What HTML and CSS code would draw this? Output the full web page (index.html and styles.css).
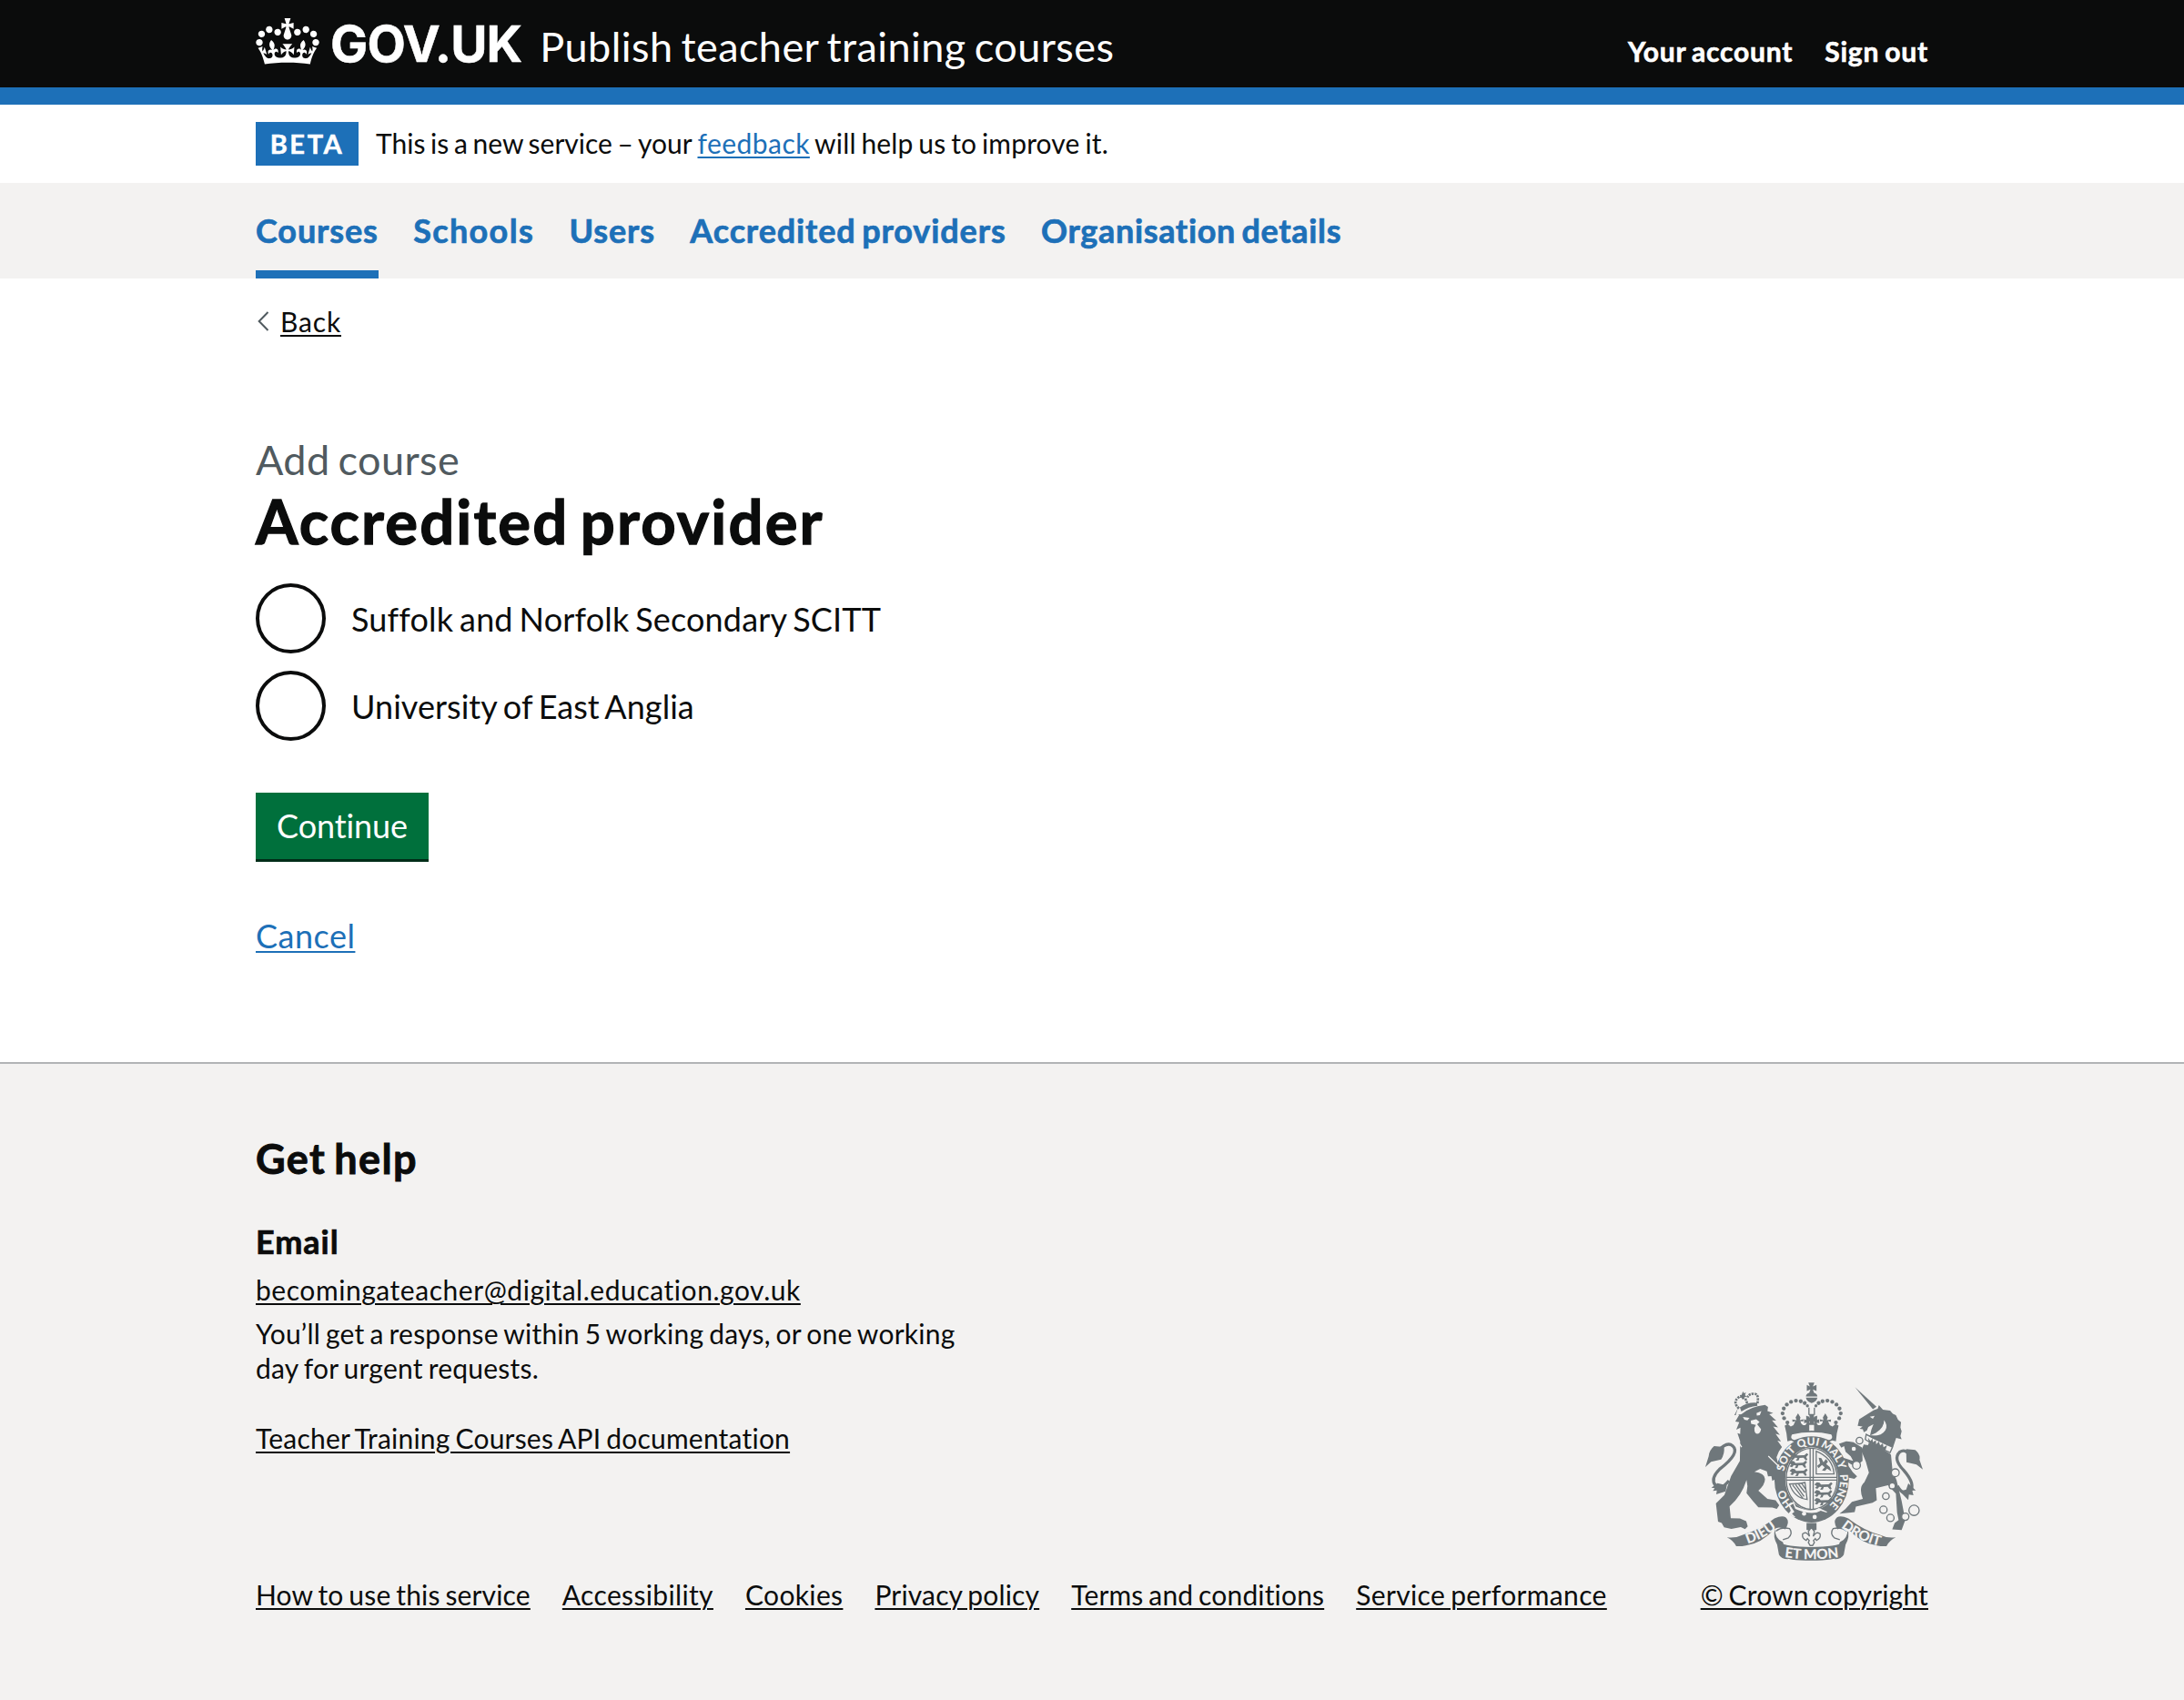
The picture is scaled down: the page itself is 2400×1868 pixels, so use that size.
FILE: index.html
```html
<!DOCTYPE html>
<html lang="en">
<head>
<meta charset="utf-8">
<title>Accredited provider - Publish teacher training courses</title>
<link rel="stylesheet" href="styles.css">
</head>
<body>
<header class="header">
  <div class="container header-row">
    <svg class="crown" viewBox="0 0 132 97" aria-hidden="true"><path fill="currentColor" fill-rule="evenodd" d="M25 30.2c3.5 1.5 7.7-.2 9.1-3.7 1.5-3.6-.2-7.8-3.9-9.2-3.6-1.4-7.6.3-9.1 3.9-1.4 3.5.3 7.5 3.9 9zM9 39.5c3.6 1.5 7.8-.2 9.2-3.7 1.5-3.6-.2-7.8-3.9-9.1-3.6-1.5-7.6.2-9.1 3.8-1.4 3.5.3 7.5 3.8 9zM4.4 57.2c3.5 1.5 7.7-.2 9.1-3.8 1.5-3.6-.2-7.7-3.9-9.1-3.5-1.5-7.6.3-9.1 3.8-1.4 3.5.3 7.6 3.9 9.1zm38.3-21.4c3.5 1.5 7.7-.2 9.1-3.8 1.5-3.6-.2-7.7-3.9-9.1-3.6-1.5-7.6.3-9.1 3.8-1.3 3.6.4 7.7 3.9 9.1zm64.4-5.6c-3.6 1.5-7.8-.2-9.1-3.7-1.5-3.6.2-7.8 3.8-9.2 3.6-1.4 7.7.3 9.2 3.9 1.3 3.5-.4 7.5-3.9 9zm15.9 9.3c-3.6 1.5-7.7-.2-9.1-3.7-1.5-3.6.2-7.8 3.7-9.1 3.6-1.5 7.7.2 9.2 3.8 1.5 3.5-.3 7.5-3.8 9zm4.7 17.7c-3.6 1.5-7.8-.2-9.2-3.8-1.5-3.6.2-7.7 3.9-9.1 3.6-1.5 7.7.3 9.2 3.8 1.3 3.5-.4 7.6-3.9 9.1zM89.3 35.8c-3.6 1.5-7.8-.2-9.2-3.8-1.4-3.6.2-7.7 3.9-9.1 3.6-1.5 7.7.3 9.2 3.8 1.4 3.6-.3 7.7-3.9 9.1zM69.7 17.7l8.9 4.7V9.3l-8.9 2.8c-.2-.3-.5-.6-.9-.9L72.4 0H59.6l3.5 11.2c-.3.3-.6.5-.9.9l-8.8-2.8v13.1l8.8-4.7c.3.3.6.7.9.9l-5 15.4v.1c-.2.8-.4 1.6-.4 2.4 0 4.1 3.1 7.5 7 8.1h.2c.3 0 .7.1 1 .1.4 0 .7 0 1-.1h.2c4-.6 7.1-4.1 7.1-8.1 0-.8-.1-1.7-.4-2.4V34l-5.1-15.4c.4-.2.7-.6 1-.9zM66 92.8c16.9 0 32.8 1.1 47.1 3.2 4-16.9 8.9-26.7 14-33.5l-9.6-3.4c1 4.9 1.1 7.2 0 10.2-1.5-1.4-3-4.3-4.2-8.7L108.6 76c2.8-2 5-3.2 7.5-3.3-4.4 9.4-10 11.9-13.6 11.2-4.3-.8-6.3-4.6-5.6-7.9 1-4.7 5.7-5.9 8-.5 4.3-8.7-3-11.4-7.6-8.8 7.1-7.2 7.9-13.5 2.1-21.1-8 6.1-8.1 12.3-4.5 20.8-4.7-5.4-12.1-2.5-9.5 6.2 3.4-5.2 7.9-2 7.2 3.1-.6 4.3-6.4 7.8-13.5 7.2-10.3-.9-10.9-8-11.2-13.8 2.5-.5 7.1 1.8 11 7.3L80.2 60c-4.1 4.4-8 5.3-12.3 5.4 1.4-4.4 8-11.6 8-11.6H55.5s6.4 7.2 7.9 11.6c-4.2-.1-8-1-12.3-5.4l1.4 16.4c3.9-5.5 8.5-7.7 10.9-7.3-.3 5.8-.9 12.8-11.1 13.8-7.2.6-12.9-2.9-13.5-7.2-.7-5 3.8-8.3 7.1-3.1 2.7-8.7-4.6-11.6-9.4-6.2 3.7-8.5 3.6-14.7-4.6-20.8-5.8 7.6-5 13.9 2.2 21.1-4.7-2.6-11.9.1-7.7 8.8 2.3-5.5 7.1-4.2 8.1.5.7 3.3-1.3 7.1-5.7 7.9-3.5.7-9-1.8-13.5-11.2 2.5.1 4.7 1.3 7.5 3.3l-4.7-15.4c-1.2 4.4-2.7 7.2-4.3 8.7-1.1-3-.9-5.3 0-10.2l-9.5 3.4c5 6.9 9.9 16.7 14 33.5 14.8-2.1 30.8-3.2 47.7-3.2z"/></svg>
    <span class="logotype">GOV.UK</span>
    <span class="service-name">Publish teacher training courses</span>
    <nav class="account">
      <a>Your account</a>
      <a>Sign out</a>
    </nav>
  </div>
</header>

<div class="container phase">
  <strong class="tag">BETA</strong>
  <span class="phase-text"><span class="phase-lead">This is a new service – your</span> <a class="link link-feedback">feedback</a> will help us to improve it.</span>
</div>

<nav class="primary">
  <div class="container primary-row">
    <a class="primary-item primary-current">Courses</a>
    <a class="primary-item primary-schools">Schools</a>
    <a class="primary-item">Users</a>
    <a class="primary-item">Accredited providers</a>
    <a class="primary-item primary-organisation">Organisation details</a>
  </div>
</nav>

<main class="container main">
  <div class="back">
    <svg class="chevron" viewBox="0 0 14 24" aria-hidden="true"><path d="M12.5 2 2.7 12l9.8 10" fill="none" stroke="#505a5f" stroke-width="2"/></svg>
    <a class="back-link">Back</a>
  </div>
  <h1 class="title"><span class="caption">Add course</span>Accredited provider</h1>
  <div class="radios">
    <label class="radio"><span class="radio-dot"></span><span class="radio-label">Suffolk and Norfolk Secondary SCITT</span></label>
    <label class="radio"><span class="radio-dot"></span><span class="radio-label radio-label-short">University of East Anglia</span></label>
  </div>
  <button class="button" type="button">Continue</button>
  <div class="cancel"><a class="link link-cancel">Cancel</a></div>
</main>

<footer class="footer">
  <div class="container footer-body">
    <div class="footer-main">
      <h2 class="help-title">Get help</h2>
      <h3 class="help-sub">Email</h3>
      <p class="help-email"><a class="footer-link">becomingateacher@digital.education.gov.uk</a></p>
      <p class="help-text">You’ll get a response within 5 working days, or one working<br>day for urgent requests.</p>
      <p class="help-api"><a class="footer-link">Teacher Training Courses API documentation</a></p>
      <div class="footer-links">
        <a class="footer-link">How to use this service</a>
        <a class="footer-link footer-link-wide">Accessibility</a>
        <a class="footer-link footer-link-wide">Cookies</a>
        <a class="footer-link">Privacy policy</a>
        <a class="footer-link">Terms and conditions</a>
        <a class="footer-link footer-link-wide">Service performance</a>
      </div>
    </div>
    <div class="footer-side">
      <svg class="arms" viewBox="72 57 718 588" aria-hidden="true">
        <defs>
          <path id="garter" d="M423 486A93 110 0 0 1 423 264A93 110 0 0 1 423 486"/>
          <path id="dieu" d="M196 593Q262 578 320 528"/>
          <path id="droit" d="M510 526Q572 582 660 599"/>
          <path id="etmon" d="M310 630Q423 650 536 630"/>
          <g id="crown-half">
            <g class="ink">
              <circle cx="343" cy="189" r="6.5"/><circle cx="332" cy="175" r="6.5"/><circle cx="327" cy="159" r="6.5"/><circle cx="331" cy="143" r="6.5"/><circle cx="341" cy="130" r="6.5"/><circle cx="355" cy="121" r="6.5"/><circle cx="371" cy="117" r="6.5"/><circle cx="387" cy="119" r="6.5"/><circle cx="400" cy="125" r="6.5"/><circle cx="409" cy="134" r="5"/>
              <path d="M344 194l10 8 9-4 6-14-9 3-1-8 14 2-3-9 8-13 8 13-2 9 12-3-1 8-9-2c2 11 8 15 16 14l7-9-11 2v-13l12 4-5-13h10v72q-42 1-72 10-2-28-9-52z"/>
            </g>
            <path class="line" d="M414 140v24"/>
          </g>
          <g id="scroll-half">
            <path class="paper" d="M300 506C322 494 343 508 338 532C359 536 361 556 350 575L338 575C344 556 330 540 306 549Z"/>
            <path class="ink" d="M143 568Q172 572 196 560Q250 545 300 506Q336 490 344 512Q347 524 336 542Q314 530 300 541Q258 588 206 595Q186 599 174 597Q164 578 143 568z"/>
            <path class="line" d="M305 548Q322 533 350 539Q362 554 346 570L328 576"/>
            <path class="ink" d="M302 541Q294 566 309 592L315 625Q322 640 345 640L328 584Q302 574 302 541z"/>
          </g>
          <g id="passant">
            <path class="ink" d="M0 8l8-8 9 2 5 6 25-1 8-7 5 5-7 8 4 9-5 2-8-9-13 1-3 8-9 1 5-9-8-1-6 7-8-3 6-6z"/>
          </g>
        </defs>

        <!-- garter and shield -->
        <ellipse class="ink" cx="423" cy="377" rx="123" ry="142"/>
        <ellipse class="paper" cx="423" cy="375" rx="87" ry="104"/>
        <ellipse class="line" cx="423" cy="375" rx="84" ry="101"/>
        <path class="line" d="M418 274v202M428 274v202M339 370h168M339 379h168"/>
        <use href="#passant" x="352" y="290"/><use href="#passant" x="348" y="315"/><use href="#passant" x="350" y="341"/>
        <use href="#passant" x="432" y="386"/><use href="#passant" x="431" y="412"/><use href="#passant" x="431" y="438"/>
        <path class="line" d="M438 284v75h59q-4-53-59-75z"/>
        <path class="ink" d="M446 305l9 2 7 13 8-10 7 8-6 8 12 10 5 14-14-9-7 8-10-2 9-10-9-8-11 11-5-8 10-8z"/>
        <path class="line" d="M350 392q31 0 51-5l7 56q-43-5-58-51zM360 395l34 44M370 394l28 39M380 393l21 27M391 391l12 18"/>
        <path class="paper" d="M346 460l18-10 7 17 14 5q40 15 62-1l28 13q-43 28-98 10l-12 8-19-11 8-11z"/>
        <path class="ink" d="M352 463l10-6 7 17q55 24 84 6l28 9q-48 36-106 9l-8 1-9-9 8-6z"/>
        <circle class="paper" cx="398" cy="490" r="7"/><circle class="paper" cx="433" cy="501" r="7"/>

        <!-- crown above the shield -->
        <path class="paper" d="M350 252v-24q73-24 146 0v24q-73-28-146 0z"/>
        <use href="#crown-half"/>
        <use href="#crown-half" transform="matrix(-1 0 0 1 846 0)"/>
        <path class="line line-thick" d="M366 250Q423 224 480 250Q501 244 489 226Q423 211 357 226Q345 244 366 250z"/>
        <path class="ink" d="M412 57h20l-5 13 12-5v20l-12-5 4 11q10 3 11 12h-38q1-9 11-12l4-11-12 5v-20l10 5zM404 107h38q-3 14-19 18-16-4-19-18zM405 166l12 7-3-12h18l-3 12 12-7v26l-12-7 4 12h-20l4-12-12 7z"/>

        <!-- lion -->
        <path class="ink" d="M168 165l23-3q25-24 78-31l10 7-2 13 19 7-13 4 23 21-14-1 20 23-16-3 22 28-14-4 18 26-12-3 15 21-10 14-8 20 8 33 13 21 2 39-6 8-6-16-7 11-8-24-10 6-3-16-11 1-4-17-22-8-19 10q34 4 35 24 0 19-22 38l30 27 27 5 12 16-8 12-15-4-46-1-19-22-20-25 3-23-3-20q-16 52-56 87l4 39 30 1 21 9 5 17-9 9-14-7-31 6-24-5-8-14-12-5-7-60 28-28 22-62 29-50 1-65-9-27 9 3 1-21-14 7 10-25-13-2 14-24-13 3 8-24z"/>
        <path class="paper" d="M196 171l22 3-7 8-10-2zM241 158l16-7-5 14-10 1zM222 183l18-5 11 9-8 8 13 16q-3 15-13 15t-9-19l5-10-16-4z"/>
        <path class="cut" d="M280 300l37 36M182 255l10 15"/>
        <path class="tail" d="M150 381Q117 420 105 396Q88 374 119 343Q189 289 162 266Q143 250 112 285"/>
        <path class="ink" d="M134 270l-33-3q-17 14-18 34l-11 35 19-17 33-8q12-17 10-41zM112 389l-20 15 11 2-6 9 13-2-2 13 31-10 4-19z"/>
        <path class="ink" d="M191 153l-5-14q25-18 57-15l1 10q-30 3-53 19zM196 87l4 6 6-3-3 9 5 5-9 2-2 8-5-7-8 1 7-8z"/>
        <path class="line dots" d="M183 143Q163 124 178 109T198 111M244 126Q250 94 233 94T211 106M204 110l8 20"/>

        <!-- unicorn -->
        <path class="ink" d="M566 72l71 65-12 8z"/>
        <path class="ink" d="M628 148l13-4 4-12 13 15 24 3 9 10 10 5 7 15 10 8-2 17 4 13-4 16 4 10-18-4-10 30q-22-2-76-39l4-18 7-18-17 9-5 12-10 5-3-10-11-1 10-8-16-2 5-22z"/>
        <path class="paper" d="M615 170l16-3-6 10zM662 181q1 25-27 42l-20 9q38 4 51-17 10-16-4-34z"/>
        <path class="ink" d="M600 229l16 15-7 20-14-2-8 20 15 37 10 36-15 31q-20 17-5 55l-36 10-22 24-19 15 50-5 4-18 55-13 14-8-3-40 40-10 26 28 4 62 5 25-13 10-8 21 31 2 12-33-12-63-17-69-13-30-5-52-17-36 20-8-43-18z"/>
        <path class="ink" d="M590 272l-29-18-24-3-24 8 8 13 9-5 5 19 17 15 8 15-31-10-14 10 3 16 8 8 2 17 16-2-5 15 25 5 9-8-14-14-14-20-2-12 25 14 23-19z"/>
        <path class="paper" d="M601 228l23 13 70 31-9 22-40-24-41-19z"/>
        <path class="line" d="M603 228q50 26 87 42l-8 18q-50-22-82-43z"/>
        <path class="ink" d="M609 239l8 11 7-8 1 12 10-7 1 14 9-9 4 13 9-7 2 13 12-7-6 18-54-27z"/>
        <path class="tail" d="M706 398Q723 431 748 416Q767 393 727 347Q690 309 714 286Q735 273 751 304"/>
        <path class="ink" d="M735 277l30 3q18 15 14 32l11 32-21-16-33-8zM714 416l21-6 7-20 25 23-12 0 4 16-15-2-2 18z"/>
        <g class="chain"><circle cx="562" cy="276" r="9"/><circle cx="581" cy="249" r="11"/><circle cx="571" cy="330" r="13"/><circle cx="699" cy="355" r="13"/><circle cx="689" cy="398" r="10"/><circle cx="668" cy="432" r="11"/><circle cx="660" cy="477" r="12"/><circle cx="683" cy="504" r="12"/><circle cx="732" cy="500" r="12"/><circle cx="761" cy="479" r="17"/></g>
        <g class="garter-text">
          <text><textPath href="#garter" startOffset="98">HO</textPath></text>
          <text><textPath href="#garter" startOffset="226">SOIT</textPath></text>
          <text><textPath href="#garter" startOffset="311">QUI</textPath></text>
          <text><textPath href="#garter" startOffset="390">MAL</textPath></text>
          <text><textPath href="#garter" startOffset="440">Y</textPath></text>
          <text><textPath href="#garter" startOffset="524">PENSE</textPath></text>
        </g>

        <!-- motto scroll and fleur-de-lis -->
        <path class="ink" d="M406 521h33v22q-16 7-33 0z"/>
        <path class="paper line" d="M422 535l10 14-4 16q11-19 23-8 3 14-12 21l-4-6-6 7 3 6-6 10h-8l-6-10 3-6-6-7-4 6q-15-7-12-21 12-11 23 8l-4-16z"/>
        <use href="#scroll-half"/>
        <use href="#scroll-half" transform="matrix(-1 0 0 1 844 0)"/>
        <path class="ink" d="M313 584Q340 600 422 600Q504 600 531 584L523 628Q500 645 422 645Q344 645 325 631z"/>
        <g class="motto-text">
          <text><textPath href="#dieu" startOffset="50%">DIEU</textPath></text>
          <text><textPath href="#droit" startOffset="50%">DROIT</textPath></text>
          <text><textPath href="#etmon" startOffset="50%">ET MON</textPath></text>
        </g>
      </svg>
      <a class="footer-link">© Crown copyright</a>
    </div>
  </div>
</footer>
</body>
</html>
```
FILE: styles.css
```css
body {
  margin: 0;
  background: #fff;
  color: #0b0c0c;
  font-family: Lato, "Open Sans", sans-serif;
  font-size: 30px;
  line-height: 38px;
  letter-spacing: 0.16px;
  word-spacing: -2px;
  font-variant-ligatures: none;
}
h1, h2, h3, p { margin: 0; }
.container { width: 1838px; margin: 0 auto; }

/* header */
.header { background: #0b0c0c; color: #fff; height: 96px; border-bottom: 19px solid #1d70b8; }
.header-row { display: flex; align-items: baseline; padding-top: 18px; }
.crown { width: 70px; height: 51px; align-self: flex-start; margin-top: 2px; }
.logotype { font-family: Inter, sans-serif; font-weight: 700; font-size: 55px; line-height: 60px; letter-spacing: -0.85px; margin-left: 12px; -webkit-text-stroke: 0.5px currentColor; }
.service-name { font-size: 45px; line-height: 48px; letter-spacing: 0.44px; word-spacing: -3px; margin-left: 20px; }
.account { margin-left: auto; display: flex; gap: 35px; font-weight: 700; letter-spacing: 0.8px; -webkit-text-stroke: 0.6px currentColor; }

/* phase banner */
.phase { height: 86px; display: flex; align-items: center; gap: 19px; }
.tag { box-sizing: border-box; width: 113px; height: 48px; line-height: 48px; text-align: center; background: #1d70b8; color: #fff; font-size: 29px; letter-spacing: 2.6px; -webkit-text-stroke: 0.5px currentColor; }
.phase-text { letter-spacing: 0.15px; padding-bottom: 2px; }
.phase-lead { letter-spacing: 0; }
.link { color: #1d70b8; text-decoration: underline; text-decoration-thickness: 2px; text-underline-offset: 3px; }
.link-feedback { letter-spacing: 0.45px; }

/* primary navigation */
.primary { background: #f3f2f1; }
.primary-row { display: flex; gap: 38.3px; }
.primary-item { box-sizing: border-box; height: 105px; padding-top: 33px; color: #1d70b8; font-weight: 700; font-size: 36px; letter-spacing: 0.88px; word-spacing: -3px; -webkit-text-stroke: 0.7px currentColor; }
.primary-current { border-bottom: 9px solid #1d70b8; }
.primary-schools { letter-spacing: 1.36px; }
.primary-organisation { letter-spacing: 0.67px; }

/* main */
.back { display: flex; align-items: center; gap: 12px; padding-top: 28px; margin-left: 1px; }
.chevron { width: 14px; height: 24px; }
.back-link { letter-spacing: 0.84px; text-decoration: underline; text-decoration-thickness: 2px; text-underline-offset: 3px; }
.title { margin-top: 105px; font-size: 67px; line-height: 76px; font-weight: 700; letter-spacing: 2.15px; word-spacing: -6px; -webkit-text-stroke: 1.3px currentColor; }
.caption { display: block; color: #505a5f; font-size: 45px; line-height: 57px; font-weight: 400; letter-spacing: 0.4px; word-spacing: -3px; -webkit-text-stroke: 0; }
.radios { display: flex; flex-direction: column; gap: 19px; margin-top: 31px; }
.radio { display: flex; align-items: center; gap: 28px; }
.radio-dot { box-sizing: border-box; width: 77px; height: 77px; border: 4px solid #0b0c0c; border-radius: 50%; }
.radio-label { font-size: 36px; word-spacing: -2.5px; }
.radio-label-short { letter-spacing: 0.05px; }
.button { display: block; width: 190px; height: 73px; margin-top: 57px; padding: 0; border: 0; background: #00703c; color: #fff; box-shadow: 0 3px 0 #002d18; font-family: inherit; font-size: 36px; line-height: 73px; letter-spacing: -0.1px; }
.cancel { margin-top: 65px; font-size: 36px; }
.link-cancel { letter-spacing: 0.5px; }

/* footer */
.footer { margin-top: 120px; border-top: 2px solid #b1b4b6; background: #f3f2f1; }
.footer-body { display: flex; justify-content: space-between; align-items: flex-end; padding: 80px 0 97px; }
.help-title { font-size: 45px; line-height: 48px; letter-spacing: 1.35px; word-spacing: -3px; -webkit-text-stroke: 0.9px currentColor; }
.help-sub { margin-top: 48px; font-size: 36px; letter-spacing: 0.95px; -webkit-text-stroke: 0.7px currentColor; }
.help-email { margin-top: 15px; letter-spacing: 0.55px; }
.help-text { margin-top: 10px; letter-spacing: 0.23px; line-height: 38.3px; }
.help-api { margin-top: 38px; letter-spacing: 0.21px; }
.footer-links { display: flex; gap: 35px; margin-top: 134px; }
.footer-link { text-decoration: underline; text-decoration-thickness: 2px; text-underline-offset: 3px; }
.footer-link-wide { letter-spacing: 0.35px; }
.footer-side { display: flex; flex-direction: column; align-items: center; gap: 18px; }

/* coat of arms */
.arms { width: 239px; height: 196px; color: #6f777b; }
.ink { fill: currentColor; }
.paper { fill: #f3f2f1; }
.line { fill: none; stroke: currentColor; stroke-width: 4; }
.line.paper { fill: #f3f2f1; }
.line-thick { fill: #f3f2f1; stroke-width: 5; }
.dots { stroke-width: 8; stroke-dasharray: 7 3; }
.cut { fill: none; stroke: #f3f2f1; stroke-width: 4; }
.tail { fill: none; stroke: currentColor; stroke-width: 10; }
.chain { fill: #f3f2f1; stroke: currentColor; stroke-width: 4; }
.garter-text, .motto-text { fill: #f3f2f1; font-family: Lato, sans-serif; font-weight: 900; text-anchor: middle; letter-spacing: 0; word-spacing: 0; }
.garter-text { font-size: 36px; }
.motto-text { font-size: 46px; }
```
